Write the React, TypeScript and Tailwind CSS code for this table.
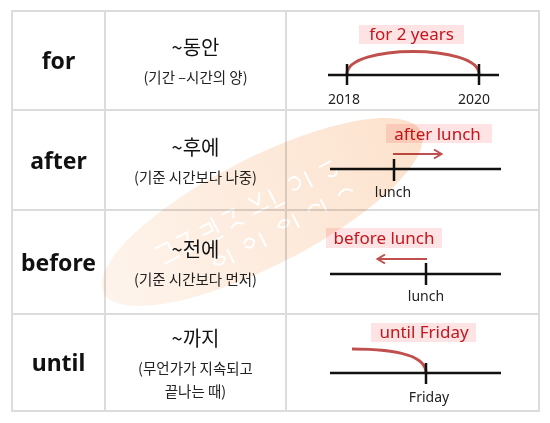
import React from "react";

const RED = "#c4161c";
const PINK = "#fde3e3";
const ARC = "#c0504d";

function Label({ x, y, w, h, cx, by, text }: { x: number; y: number; w: number; h: number; cx: number; by: number; text: string }) {
  return (
    <g>
      <rect x={x} y={y} width={w} height={h} fill={PINK} />
      <text x={cx} y={by} textAnchor="middle" fill={RED} fontSize={17} fontFamily='"Noto Sans", sans-serif'>
        {text}
      </text>
    </g>
  );
}

const small = { fontSize: 14, fontFamily: '"Noto Sans", sans-serif', fill: "#222" };

const rows = [
  {
    word: "for",
    title: "~동안",
    sub: ["(기간 –시간의 양)"],
    hc: "h-[97px]",
    diagram: (
      <svg width={251} height={97} viewBox="0 0 251 97" className="block">
        <Label x={72} y={13} w={105} h={19} cx={124.5} by={28} text="for 2 years" />
        <path d="M60 62 C60 32, 192 32, 192 62" fill="none" stroke={ARC} strokeWidth={3} />
        <line x1={41} y1={63} x2={212} y2={63} stroke="#111" strokeWidth={2.5} />
        <line x1={60} y1={52} x2={60} y2={73} stroke="#111" strokeWidth={2.5} />
        <line x1={192} y1={52} x2={192} y2={73} stroke="#111" strokeWidth={2.5} />
        <text x={57} y={92} textAnchor="middle" {...small}>2018</text>
        <text x={187} y={92} textAnchor="middle" {...small}>2020</text>
      </svg>
    ),
  },
  {
    word: "after",
    title: "~후에",
    sub: ["(기준 시간보다 나중)"],
    hc: "h-[98px]",
    diagram: (
      <svg width={251} height={98} viewBox="0 0 251 98" className="block">
        <Label x={99} y={13} w={106} h={19} cx={150.5} by={29} text="after lunch" />
        <line x1={106} y1={43} x2={154} y2={43} stroke={ARC} strokeWidth={2} />
        <path d="M147 38.5 L154.5 43 L147 47.5" fill="none" stroke={ARC} strokeWidth={2} />
        <line x1={43} y1={58} x2={214} y2={58} stroke="#111" strokeWidth={2.5} />
        <line x1={107} y1={48} x2={107} y2={70} stroke="#111" strokeWidth={2.5} />
        <text x={106} y={86} textAnchor="middle" {...small}>lunch</text>
      </svg>
    ),
  },
  {
    word: "before",
    title: "~전에",
    sub: ["(기준 시간보다 먼저)"],
    hc: "h-[102px]",
    diagram: (
      <svg width={251} height={102} viewBox="0 0 251 102" className="block">
        <Label x={39} y={17} w={116} h={20} cx={97} by={33} text="before lunch" />
        <line x1={91} y1={48} x2={140} y2={48} stroke={ARC} strokeWidth={2} />
        <path d="M98 43.5 L90.5 48 L98 52.5" fill="none" stroke={ARC} strokeWidth={2} />
        <line x1={43} y1={63} x2={214} y2={63} stroke="#111" strokeWidth={2.5} />
        <line x1={139} y1={52} x2={139} y2={74} stroke="#111" strokeWidth={2.5} />
        <text x={139} y={90} textAnchor="middle" {...small}>lunch</text>
      </svg>
    ),
  },
  {
    word: "until",
    title: "~까지",
    sub: ["(무언가가 지속되고", "끝나는 때)"],
    hc: "h-[95px]",
    diagram: (
      <svg width={251} height={95} viewBox="0 0 251 95" className="block">
        <Label x={84} y={8} w={105} h={19} cx={137} by={23} text="until Friday" />
        <path d="M65 34 C115 34, 139 42, 139 58" fill="none" stroke={ARC} strokeWidth={3} />
        <line x1={43} y1={58} x2={214} y2={58} stroke="#111" strokeWidth={2.5} />
        <line x1={139} y1={48} x2={139} y2={69} stroke="#111" strokeWidth={2.5} />
        <text x={142} y={87} textAnchor="middle" {...small}>Friday</text>
      </svg>
    ),
  },
];

function Watermark() {
  return (
    <svg width={550} height={423} viewBox="0 0 550 423" className="absolute left-0 top-0 pointer-events-none mix-blend-multiply">
      <defs>
        <linearGradient id="wm" x1="0" y1="0.5" x2="1" y2="0.5">
          <stop offset="0" stopColor="#fef4ec" />
          <stop offset="1" stopColor="#fce2cd" />
        </linearGradient>
      </defs>
      <g transform="rotate(-27 262 212)">
        <ellipse cx={262} cy={212} rx={178} ry={54} fill="url(#wm)" />
        <g fill="none" stroke="#ffffff" strokeWidth={2} strokeLinecap="round">
          <path d="M150 196 h14 v10 M152 214 h16 M174 196 h12 l-4 10 M176 212 q6 6 12 0" />
          <path d="M200 198 h10 v8 h-10 M214 194 v16 M198 216 h18 M226 196 h12 l-4 8 M228 212 q6 -4 12 2" />
          <path d="M256 194 l6 10 l6 -10 M254 210 h16 M278 196 v14 M276 214 h10" />
          <path d="M300 196 q8 -4 10 6 q-4 8 -10 4 M318 196 v16 M334 198 h12 M338 210 q6 6 10 -2" />
          <path d="M196 236 q6 -8 12 0 q-6 8 -12 0 M214 230 v14 M232 232 q6 -6 10 2 q-4 8 -10 2 M250 230 v14" />
          <path d="M270 232 q6 -6 12 0 q-6 8 -12 0 M288 228 v14 M304 232 q6 -6 12 0 M320 228 v12 M338 232 q8 -6 14 2" />
        </g>
      </g>
    </svg>
  );
}

export default function App() {
  return (
    <div className="w-[550px] h-[423px] bg-white relative overflow-hidden font-['Noto_Sans','Noto_Sans_CJK_KR',sans-serif]">
      <div className="pt-[10px] pl-[11px]">
        <div className="w-[529px] border-2 border-[#dcdcdc] bg-[#dcdcdc] grid grid-cols-[91px_179px_251px] gap-[2px]">
          {rows.map((r) => (
            <React.Fragment key={r.word}>
              <div className={`bg-white flex items-center justify-center ${r.hc}`}>
                <span className="text-[23px] font-bold text-[#111] leading-none">{r.word}</span>
              </div>
              <div className={`bg-white flex flex-col items-center justify-center ${r.hc}`}>
                <span className="text-[20px] text-[#111] leading-[28px] font-['Noto_Sans_CJK_KR',sans-serif]">
                  {r.title}
                </span>
                <div className="mt-[4px] flex flex-col items-center">
                  {r.sub.map((s) => (
                    <span key={s} className="text-[14.5px] text-[#222] leading-[23px] font-['Noto_Sans_CJK_KR',sans-serif]">
                      {s}
                    </span>
                  ))}
                </div>
              </div>
              <div className={`bg-white ${r.hc}`}>{r.diagram}</div>
            </React.Fragment>
          ))}
        </div>
      </div>
      <Watermark />
    </div>
  );
}
